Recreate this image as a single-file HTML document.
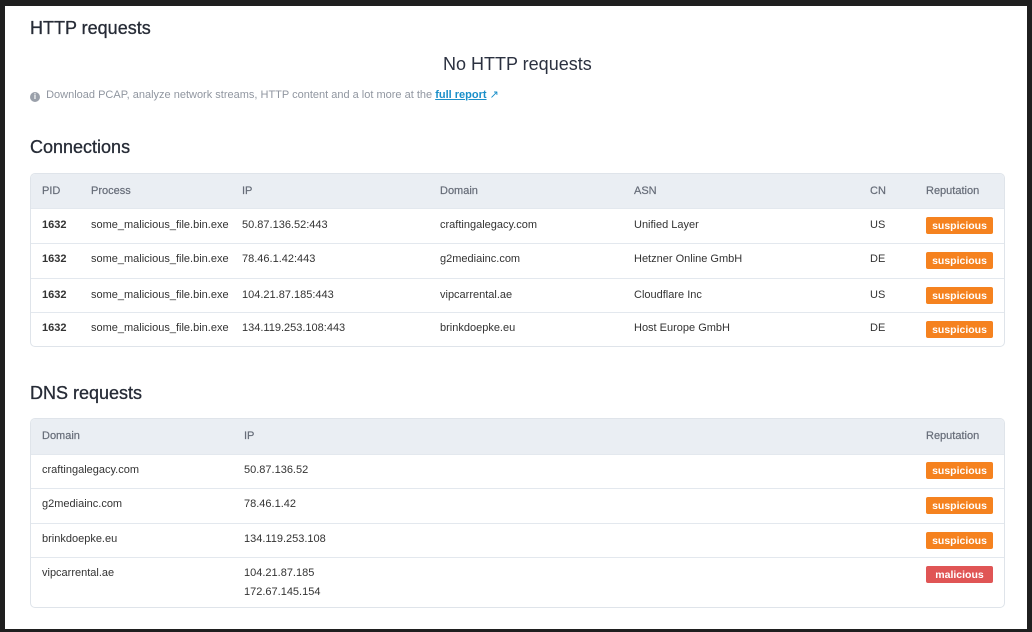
<!DOCTYPE html>
<html><head><style>
*{margin:0;padding:0;box-sizing:border-box}
body{width:1032px;height:632px;background:#1f1f1f;font-family:"Liberation Sans",sans-serif;position:relative;overflow:hidden}
.page{position:absolute;left:5px;top:6px;width:1022px;height:623px;background:#fff}
.a{position:absolute;white-space:nowrap}
h2{position:absolute;font-size:18px;font-weight:normal;color:#262b36;left:30px;-webkit-text-stroke:0.3px #262b36}
.tbl{position:absolute;left:30px;width:975px;border:1px solid #dfe4ea;border-radius:5px;overflow:hidden;background:#fff}
.hd{position:absolute;left:0;top:0;width:100%;height:35px;background:#eaeef3}
.row{position:absolute;left:0;width:100%;border-top:1px solid #e3e8ee}
.t{position:absolute;font-size:11px;color:#333;white-space:nowrap}
.h{font-size:11px;color:#666c78;-webkit-text-stroke:0.2px #666c78}
.b{position:absolute;left:895px;width:67px;height:17px;border-radius:2px;color:#fff;font-size:10.5px;font-weight:bold;text-align:center;line-height:18px;background:#f5821f}
.m{background:#e05555}
</style></head><body><div class="page"></div>
<h2 style="top:18px">HTTP requests</h2>
<div class="a" style="left:443px;top:54px;font-size:18px;color:#2b3140">No HTTP requests</div>
<div class="a" style="left:30px;top:88px;font-size:11px;color:#9096a0"><span style="display:inline-block;width:10px;height:10px;border-radius:50%;background:#9aa0aa;color:#fff;font-size:8px;text-align:center;line-height:10px;font-weight:bold;vertical-align:-1px">i</span>&nbsp; Download PCAP, analyze network streams, HTTP content and a lot more at the <span style="color:#1a8fc9;text-decoration:underline;font-weight:bold">full report</span> <span style="color:#1a8fc9">&#8599;</span></div>
<h2 style="top:137px">Connections</h2>
<div class="tbl" style="top:173px;height:174px">
<div class="hd"></div>
<div class="t h" style="left:11px;top:11px">PID</div><div class="t h" style="left:60px;top:11px">Process</div><div class="t h" style="left:211px;top:11px">IP</div><div class="t h" style="left:409px;top:11px">Domain</div><div class="t h" style="left:603px;top:11px">ASN</div><div class="t h" style="left:839px;top:11px">CN</div><div class="t h" style="left:895px;top:11px">Reputation</div>
<div class="row" style="top:34px;height:35px"><div class="t" style="left:11px;top:10px;font-weight:bold">1632</div><div class="t" style="left:60px;top:10px">some_malicious_file.bin.exe</div><div class="t" style="left:211px;top:10px">50.87.136.52:443</div><div class="t" style="left:409px;top:10px">craftingalegacy.com</div><div class="t" style="left:603px;top:10px">Unified Layer</div><div class="t" style="left:839px;top:10px">US</div><div class="b" style="top:8px">suspicious</div></div>
<div class="row" style="top:69px;height:35px"><div class="t" style="left:11px;top:9px;font-weight:bold">1632</div><div class="t" style="left:60px;top:9px">some_malicious_file.bin.exe</div><div class="t" style="left:211px;top:9px">78.46.1.42:443</div><div class="t" style="left:409px;top:9px">g2mediainc.com</div><div class="t" style="left:603px;top:9px">Hetzner Online GmbH</div><div class="t" style="left:839px;top:9px">DE</div><div class="b" style="top:8px">suspicious</div></div>
<div class="row" style="top:104px;height:35px"><div class="t" style="left:11px;top:10px;font-weight:bold">1632</div><div class="t" style="left:60px;top:10px">some_malicious_file.bin.exe</div><div class="t" style="left:211px;top:10px">104.21.87.185:443</div><div class="t" style="left:409px;top:10px">vipcarrental.ae</div><div class="t" style="left:603px;top:10px">Cloudflare Inc</div><div class="t" style="left:839px;top:10px">US</div><div class="b" style="top:8px">suspicious</div></div>
<div class="row" style="top:138px;height:35px"><div class="t" style="left:11px;top:9px;font-weight:bold">1632</div><div class="t" style="left:60px;top:9px">some_malicious_file.bin.exe</div><div class="t" style="left:211px;top:9px">134.119.253.108:443</div><div class="t" style="left:409px;top:9px">brinkdoepke.eu</div><div class="t" style="left:603px;top:9px">Host Europe GmbH</div><div class="t" style="left:839px;top:9px">DE</div><div class="b" style="top:8px">suspicious</div></div>
</div>
<h2 style="top:383px">DNS requests</h2>
<div class="tbl" style="top:418px;height:190px">
<div class="hd" style="height:36px"></div>
<div class="t h" style="left:11px;top:11px">Domain</div><div class="t h" style="left:213px;top:11px">IP</div><div class="t h" style="left:895px;top:11px">Reputation</div>
<div class="row" style="top:35px;height:35px"><div class="t" style="left:11px;top:9px">craftingalegacy.com</div><div class="t" style="left:213px;top:9px">50.87.136.52</div><div class="b" style="top:7px">suspicious</div></div>
<div class="row" style="top:69px;height:35px"><div class="t" style="left:11px;top:9px">g2mediainc.com</div><div class="t" style="left:213px;top:9px">78.46.1.42</div><div class="b" style="top:8px">suspicious</div></div>
<div class="row" style="top:104px;height:35px"><div class="t" style="left:11px;top:9px">brinkdoepke.eu</div><div class="t" style="left:213px;top:9px">134.119.253.108</div><div class="b" style="top:8px">suspicious</div></div>
<div class="row" style="top:138px;height:52px"><div class="t" style="left:11px;top:9px">vipcarrental.ae</div><div class="t" style="left:213px;line-height:19px;top:6px">104.21.87.185<br>172.67.145.154</div><div class="b m" style="top:8px">malicious</div></div>
</div>
</body></html>
